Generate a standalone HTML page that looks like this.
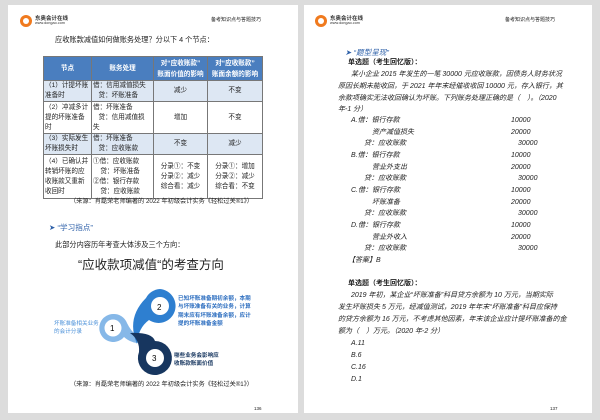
<!DOCTYPE html>
<html><head><meta charset="utf-8"><style>
*{margin:0;padding:0;box-sizing:border-box}
body{width:600px;height:420px;background:#dcdcdc;position:relative;overflow:hidden;font-family:"Liberation Sans","Noto Sans CJK SC",sans-serif;color:#222}
.pg{position:absolute;background:#fff;top:5px;height:408px}
.t{position:absolute;font-size:7px;white-space:nowrap;line-height:1}
.i{font-style:italic}
.logo{position:absolute;top:13px}
.logo .c{position:absolute;left:0;top:2px;width:12px;height:12px;border-radius:50%;background:#f07a1e}
.logo .c:after{content:"";position:absolute;left:3px;top:3px;width:6px;height:6px;border-radius:50%;background:#fff}
.logo .a{position:absolute;left:15px;top:1px;font-size:5.5px;font-weight:bold;white-space:nowrap;color:#333}
.logo .b{position:absolute;left:15px;top:8px;font-size:3.8px;white-space:nowrap;color:#333}
table{position:absolute;left:43px;top:56px;border-collapse:collapse;font-size:6.6px;table-layout:fixed;width:219px}
td{border:1px solid #777;padding:0 1px;line-height:10px;vertical-align:middle;white-space:nowrap;overflow:hidden}
th{background:#4a7ebf;color:#fff;border:1px solid #777;font-weight:bold;line-height:11px;font-size:6.6px;white-space:nowrap;overflow:hidden}
.b1{background:#dde7f3}
.ctr{text-align:center}
.h{position:absolute;font-size:7.6px;color:#2c5fa8;white-space:nowrap}
</style></head><body>
<div class="pg" style="left:8px;width:290px"></div>
<div class="pg" style="left:304px;width:288px"></div>

<div class="logo" style="left:20px"><div class="c"></div><div class="a">东奥会计在线</div><div class="b">www.dongao.com</div></div>
<div class="t" style="left:211px;top:18px;font-size:5px">备考知识点与答题技巧</div>
<div class="logo" style="left:315px"><div class="c"></div><div class="a">东奥会计在线</div><div class="b">www.dongao.com</div></div>
<div class="t" style="left:505px;top:18px;font-size:5px">备考知识点与答题技巧</div>

<div class="t" style="left:55px;top:36px;font-size:7.2px">应收账款减值如何做账务处理？分以下 4 个节点：</div>
<table>
<colgroup><col style="width:48px"><col style="width:62px"><col style="width:54px"><col style="width:55px"></colgroup>
<tr style="height:24px"><th>节点</th><th>账务处理</th><th>对“应收账款”<br>账面价值的影响</th><th>对“应收账款”<br>账面余额的影响</th></tr>
<tr class="b1" style="height:21px"><td>（1）计提坏账<br>准备时</td><td>借：信用减值损失<br>&nbsp;&nbsp;&nbsp;贷：坏账准备</td><td class="ctr">减少</td><td class="ctr">不变</td></tr>
<tr style="height:32px"><td>（2）冲减多计<br>提的坏账准备<br>时</td><td>借：坏账准备<br>&nbsp;&nbsp;&nbsp;贷：信用减值损<br>失</td><td class="ctr">增加</td><td class="ctr">不变</td></tr>
<tr class="b1" style="height:20px"><td>（3）实际发生<br>坏账损失时</td><td>借：坏账准备<br>&nbsp;&nbsp;&nbsp;贷：应收账款</td><td class="ctr">不变</td><td class="ctr">减少</td></tr>
<tr style="height:44px"><td>（4）已确认并<br>转销坏账的应<br>收账款又重新<br>收回时</td><td>①借：应收账款<br>&nbsp;&nbsp;&nbsp;&nbsp;贷：坏账准备<br>②借：银行存款<br>&nbsp;&nbsp;&nbsp;&nbsp;贷：应收账款</td><td class="ctr">分录①：不变<br>分录②：减少<br>综合看：减少</td><td class="ctr">分录①：增加<br>分录②：减少<br>综合看：不变</td></tr>
</table>
<div class="t" style="left:70px;top:199px;font-size:6.2px">（来源：肖磊荣老师编著的 2022 年初级会计实务《轻松过关®1》）</div>
<div class="h" style="left:49px;top:222px">➤ “学习指点”</div>
<div class="t" style="left:55px;top:241px;font-size:7.2px">此部分内容历年考查大体涉及三个方向：</div>
<div class="t" style="left:78px;top:259px;font-size:12.5px">“应收款项减值“的考查方向</div>

<svg style="position:absolute;left:0;top:0" width="300" height="420">
<path d="M113 314 A14 14 0 1 0 124 337 Q134 346 150 342 Q134 338 127 323 A14 14 0 0 0 113 314Z" fill="#86b8e8"/>
<circle cx="113" cy="328" r="8.5" fill="#fff"/>
<path d="M160 289 A17 17 0 1 1 149 320 Q138 328 137 344 Q126 318 146 298 A17 17 0 0 1 160 289Z" fill="#2e7fd0"/>
<circle cx="160" cy="306" r="9" fill="#fff"/>
<path d="M155 341 A17 17 0 1 1 139 352 Q140 340 130 333 Q152 332 155 341Z" fill="#17365f"/>
<circle cx="155" cy="358" r="9" fill="#fff"/>
<text x="110" y="331" font-size="8" font-family="Liberation Sans">1</text>
<text x="157" y="310" font-size="8" font-family="Liberation Sans">2</text>
<text x="152" y="361" font-size="8" font-family="Liberation Sans">3</text>
</svg>
<div class="t" style="left:54px;top:320px;font-size:5.6px;color:#4a90d9;line-height:8px">坏账准备相关业务<br>的会计分录</div>
<div class="t" style="left:178px;top:295px;font-size:5.6px;color:#2e6fc0;line-height:8.3px;font-weight:bold">已知坏账准备期初余额，本期<br>与坏账准备有关的业务，计算<br>期末应有坏账准备余额，应计<br>提的坏账准备金额</div>
<div class="t" style="left:174px;top:352px;font-size:5.6px;color:#17365f;line-height:8.3px;font-weight:bold">哪些业务会影响应<br>收账款账面价值</div>
<div class="t" style="left:70px;top:382px;font-size:6.2px">（来源：肖磊荣老师编著的 2022 年初级会计实务《轻松过关®1》）</div>
<div class="t" style="left:254px;top:407px;font-size:4.5px">136</div>

<div class="h i" style="left:345px;top:47px">➤ “题型呈现”</div>
<div class="t" style="left:348px;top:59px;font-weight:bold">单选题（考生回忆版）：</div>
<div class="t i" style="left:351px;top:71px">某小企业 2015 年发生的一笔 30000 元应收账款，因债务人财务状况</div>
<div class="t i" style="left:338px;top:83px">原因长期未能收回，于 2021 年年末经催收收回 10000 元，存入银行，其</div>
<div class="t i" style="left:338px;top:95px">余款项确实无法收回确认为坏账。下列账务处理正确的是（　）。（2020</div>
<div class="t i" style="left:338px;top:106px">年-1 分）</div>
<div class="t i" style="left:351px;top:117px">A.借：银行存款</div><div class="t i" style="left:511px;top:117px">10000</div>
<div class="t i" style="left:372px;top:129px">资产减值损失</div><div class="t i" style="left:511px;top:129px">20000</div>
<div class="t i" style="left:364px;top:140px">贷：应收账款</div><div class="t i" style="left:518px;top:140px">30000</div>
<div class="t i" style="left:351px;top:152px">B.借：银行存款</div><div class="t i" style="left:511px;top:152px">10000</div>
<div class="t i" style="left:372px;top:164px">营业外支出</div><div class="t i" style="left:511px;top:164px">20000</div>
<div class="t i" style="left:364px;top:175px">贷：应收账款</div><div class="t i" style="left:518px;top:175px">30000</div>
<div class="t i" style="left:351px;top:187px">C.借：银行存款</div><div class="t i" style="left:511px;top:187px">10000</div>
<div class="t i" style="left:372px;top:199px">坏账准备</div><div class="t i" style="left:511px;top:199px">20000</div>
<div class="t i" style="left:364px;top:210px">贷：应收账款</div><div class="t i" style="left:518px;top:210px">30000</div>
<div class="t i" style="left:351px;top:222px">D.借：银行存款</div><div class="t i" style="left:511px;top:222px">10000</div>
<div class="t i" style="left:372px;top:234px">营业外收入</div><div class="t i" style="left:511px;top:234px">20000</div>
<div class="t i" style="left:364px;top:245px">贷：应收账款</div><div class="t i" style="left:518px;top:245px">30000</div>
<div class="t i" style="left:348px;top:257px">【答案】B</div>
<div class="t" style="left:348px;top:280px;font-weight:bold">单选题（考生回忆版）：</div>
<div class="t i" style="left:351px;top:292px">2019 年初，某企业“坏账准备”科目贷方余额为 10 万元，当期实际</div>
<div class="t i" style="left:338px;top:304px">发生坏账损失 5 万元，经减值测试，2019 年年末“坏账准备”科目应保持</div>
<div class="t i" style="left:338px;top:316px">的贷方余额为 16 万元，不考虑其他因素，年末该企业应计提坏账准备的金</div>
<div class="t i" style="left:338px;top:328px">额为（　）万元。（2020 年-2 分）</div>
<div class="t i" style="left:351px;top:340px">A.11</div>
<div class="t i" style="left:351px;top:352px">B.6</div>
<div class="t i" style="left:351px;top:364px">C.16</div>
<div class="t i" style="left:351px;top:376px">D.1</div>
<div class="t" style="left:550px;top:407px;font-size:4.5px">137</div>
</body></html>
